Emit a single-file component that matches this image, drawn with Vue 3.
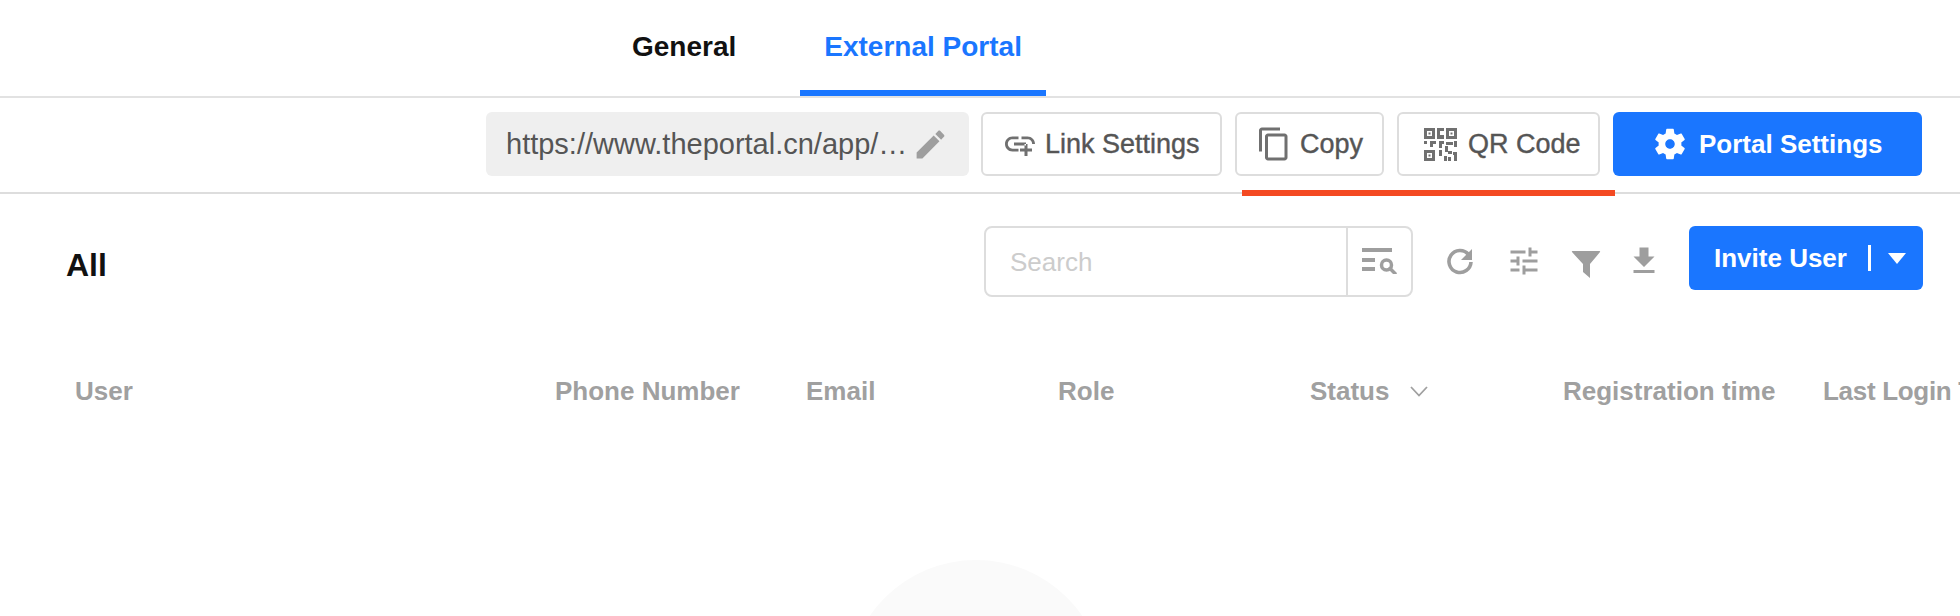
<script setup>
const columns = [
  { label: 'User', width: 480 },
  { label: 'Phone Number', width: 251 },
  { label: 'Email', width: 252 },
  { label: 'Role', width: 252 },
  { label: 'Status', width: 253, sort: true },
  { label: 'Registration time', width: 260 },
  { label: 'Last Login Time', width: 260 },
]
</script>

<template>
  <div class="page">
    <nav class="tabs">
      <a class="tab">General</a>
      <a class="tab active">External Portal</a>
    </nav>

    <div class="toolbar">
      <div class="url">
        <span class="url-text">https://www.theportal.cn/app/…</span>
        <svg class="ic-edit" viewBox="0 0 24 24"><path d="M3 17.25V21h3.75L17.81 9.94l-3.75-3.75L3 17.25zM20.71 7.04c.39-.39.39-1.02 0-1.41l-2.34-2.34c-.39-.39-1.02-.39-1.41 0l-1.83 1.83 3.75 3.75 1.83-1.83z"/></svg>
      </div>
      <button class="btn link">
        <svg class="ic-link" viewBox="0 0 24 24"><path d="M8 11h8v2H8zm12.1 1H22c0-2.76-2.24-5-5-5h-4v1.9h4c1.71 0 3.1 1.39 3.1 3.1zM3.9 12c0-1.71 1.39-3.1 3.1-3.1h4V7H7c-2.76 0-5 2.24-5 5s2.24 5 5 5h4v-1.9H7c-1.71 0-3.1-1.39-3.1-3.1zM17 12h-2v3h-3v2h3v3h2v-3h3v-2h-3z"/></svg>
        Link Settings
      </button>
      <button class="btn copy">
        <svg class="ic-copy" viewBox="0 0 24 24"><path d="M16 1H4c-1.1 0-2 .9-2 2v14h2V3h12V1zm3 4H8c-1.1 0-2 .9-2 2v14c0 1.1.9 2 2 2h11c1.1 0 2-.9 2-2V7c0-1.1-.9-2-2-2zm0 16H8V7h11v14z"/></svg>
        Copy
      </button>
      <button class="btn qr">
        <svg class="ic-qr" viewBox="0 0 33 33">
          <path fill-rule="evenodd" d="M0 0h11v11H0zM3 3v5h5V3zM22 0h11v11H22zM25 3v5h5V3zM0 22h11v11H0zM3 25v5h5v-5z"/>
          <path d="M4.5 4.5h2v2h-2zM26.5 4.5h2v2h-2zM4.5 26.5h2v2h-2z"/>
          <path d="M13 0h7v3h-4v4h4v4h-7zM0 13h3v3H0zM6 13h6v3H9v3H6zM15 13h5v3h-2v4h-3zM22 14h7v3h-7zM30 13h3v6h-3zM15 22h3v6h-3zM21 18h3v5h4v3h-4v-2h-3zM29 24h4v9h-3v-6h-1zM20 28h3v5h-3zM24 29h3v4h-3z"/>
        </svg>
        QR Code
      </button>
      <button class="btn primary portal">
        <svg class="ic-gear" viewBox="0 0 24 24"><path d="M19.14 12.94c.04-.3.06-.61.06-.94 0-.32-.02-.64-.07-.94l2.03-1.58c.18-.14.23-.41.12-.61l-1.92-3.32c-.12-.22-.37-.29-.59-.22l-2.39.96c-.5-.38-1.03-.7-1.62-.94l-.36-2.54c-.04-.24-.24-.41-.48-.41h-3.84c-.24 0-.43.17-.47.41l-.36 2.54c-.59.24-1.13.57-1.62.94l-2.39-.96c-.22-.08-.47 0-.59.22L2.74 8.87c-.12.21-.08.47.12.61l2.03 1.58c-.05.3-.09.63-.09.94s.02.64.07.94l-2.03 1.58c-.18.14-.23.41-.12.61l1.92 3.32c.12.22.37.29.59.22l2.39-.96c.5.38 1.03.7 1.62.94l.36 2.54c.05.24.24.41.48.41h3.84c.24 0 .44-.17.47-.41l.36-2.54c.59-.24 1.13-.56 1.62-.94l2.39.96c.22.08.47 0 .59-.22l1.92-3.32c.12-.22.07-.47-.12-.61l-2.01-1.58zM12 15c-1.65 0-3-1.35-3-3s1.35-3 3-3 3 1.35 3 3-1.35 3-3 3z"/></svg>
        Portal Settings
      </button>
      <div class="red-mark"></div>
    </div>

    <div class="filters">
      <h2 class="title">All</h2>
      <div class="search">
        <input class="search-input" placeholder="Search" />
        <div class="search-btn">
          <svg class="ic-search" viewBox="0 0 35 26">
            <path d="M0 0h30v4H0zM0 10h13v4H0zM0 19h13v4H0z"/>
            <circle cx="24.5" cy="17" r="5" fill="none" stroke="#9e9e9e" stroke-width="3.5"/>
            <path d="M28 20.5l5 5" fill="none" stroke="#9e9e9e" stroke-width="3.5" stroke-linecap="round"/>
          </svg>
        </div>
      </div>
      <svg class="tool refresh" viewBox="0 0 36 36">
        <path d="M26.5 11.5A11 11 0 1 0 29 19" fill="none" stroke="#9e9e9e" stroke-width="3.6"/>
        <path d="M30 6v11H19z"/>
      </svg>
      <svg class="tool tune" viewBox="0 0 24 24"><path d="M3 17v2h6v-2H3zM3 5v2h10V5H3zm10 16v-2h8v-2h-8v-2h-2v6h2zM7 9v2H3v2h4v2h2V9H7zm14 4v-2H11v2h10zm-6-4h2V7h4V5h-4V3h-2v6z"/></svg>
      <svg class="tool funnel" viewBox="0 0 36 36"><path d="M4.5 8h27c.6 0 .9.6.5 1.1L22 21v14l-7-6v-8L4 9.1C3.600 8.600 3.900 8 4.500 8z"/></svg>
      <svg class="tool download" viewBox="0 0 24 24"><path d="M19 9h-4V3H9v6H5l7 7 7-7zM5 18v2h14v-2H5z"/></svg>
      <button class="btn primary invite">
        Invite User
        <span class="sep"></span>
        <span class="caret"></span>
      </button>
    </div>

    <div class="thead">
      <div v-for="col in columns" :key="col.label" class="th" :style="{ width: col.width + 'px' }">
        {{ col.label }}
        <svg v-if="col.sort" class="ic-chevron" viewBox="0 0 18 11"><path d="M1 1l8 8.5L17 1" fill="none" stroke="#a0a0a0" stroke-width="1.8"/></svg>
      </div>
    </div>

    <div class="empty"><div class="empty-circle"></div></div>
  </div>
</template>

<style scoped>
.page {
  position: relative;
  width: 1960px;
  height: 616px;
  overflow: hidden;
  background: #fff;
  font-family: "Liberation Sans", Arial, sans-serif;
}

.tabs {
  display: flex;
  gap: 40px;
  height: 96px;
  padding-left: 608px;
  border-bottom: 2px solid #e2e2e2;
}

.tab {
  padding: 0 24px;
  line-height: 94px;
  font-size: 28px;
  font-weight: 700;
  color: #111;
}

.tab.active {
  height: 90px;
  color: #1a76ff;
  border-bottom: 6px solid #1a76ff;
}

.toolbar {
  position: relative;
  display: flex;
  justify-content: flex-end;
  gap: 13px;
  height: 96px;
  padding: 14px 38px 0 0;
  box-sizing: border-box;
  border-bottom: 2px solid #ddd;
}

.url {
  display: flex;
  align-items: center;
  width: 483px;
  height: 64px;
  margin-right: -1px;
  padding-left: 20px;
  box-sizing: border-box;
  background: #efefef;
  border-radius: 6px;
  color: #555;
  font-size: 29px;
  white-space: nowrap;
}

.ic-edit {
  flex: none;
  width: 37px;
  height: 37px;
  margin-left: 5px;
  fill: #9e9e9e;
}

.btn {
  display: flex;
  align-items: center;
  height: 64px;
  padding: 0;
  box-sizing: border-box;
  border: 2.5px solid #ddd;
  border-radius: 6px;
  background: #fff;
  color: #555;
  font-family: inherit;
  font-size: 27px;
  -webkit-text-stroke: .4px #555;
  white-space: nowrap;
}

.btn svg {
  fill: #707070;
}

.link { width: 241px; padding-left: 19px; gap: 7px; }
.ic-link { width: 36px; height: 36px; }
.copy { width: 149px; padding-left: 19px; gap: 8px; }
.ic-copy { width: 36px; height: 36px; }
.qr { width: 203px; padding-left: 25px; gap: 11px; }
.ic-qr { width: 33px; height: 33px; }

.btn.primary {
  border: 0;
  background: #1a76ff;
  color: #fff;
  font-size: 26px;
  font-weight: 700;
  -webkit-text-stroke: 0;
}

.btn.primary svg { fill: #fff; }

.portal { width: 309px; padding-left: 38px; gap: 10px; }
.ic-gear { width: 38px; height: 38px; }

.red-mark {
  position: absolute;
  left: 1242px;
  top: 92px;
  width: 373px;
  height: 6px;
  background: #f44a22;
}

.filters {
  display: flex;
  align-items: flex-start;
  height: 166px;
  padding: 32px 37px 0 66px;
  box-sizing: border-box;
}

.title {
  flex: 1;
  margin: 19px 0 0;
  font-size: 32px;
  line-height: 40px;
  font-weight: 700;
  color: #111;
}

.search {
  display: flex;
  width: 429px;
  height: 71px;
  box-sizing: border-box;
  border: 2px solid #ddd;
  border-radius: 8px;
}

.search-input {
  width: 360px;
  padding: 2px 0 0 24px;
  box-sizing: border-box;
  border: 0;
  outline: 0;
  background: transparent;
  font-family: inherit;
  font-size: 26px;
}

.search-input::placeholder { color: #ccc; }

.search-btn {
  flex: 1;
  display: flex;
  align-items: center;
  justify-content: center;
  border-left: 2px solid #ddd;
}

.ic-search { width: 35px; height: 26px; fill: #9e9e9e; margin-top: -2px; }

.tool {
  width: 36px;
  height: 36px;
  margin-top: 17px;
  fill: #9e9e9e;
}

.refresh { margin-left: 29px; }
.tune { margin-left: 28px; }
.funnel { margin-left: 26px; }
.download { margin-left: 22px; }

.invite {
  width: 234px;
  margin-left: 27px;
  padding-left: 25px;
}

.sep {
  width: 3px;
  height: 26px;
  margin-left: 21px;
  background: #fff;
}

.caret {
  margin-left: 17px;
  border-left: 9.5px solid transparent;
  border-right: 9.5px solid transparent;
  border-top: 11px solid #fff;
}

.thead {
  display: flex;
  height: 62px;
  padding-left: 75px;
  align-items: center;
  white-space: nowrap;
}

.th {
  flex: none;
  display: flex;
  align-items: center;
  font-size: 26px;
  font-weight: 700;
  color: #a0a0a0;
}

.th:last-child { letter-spacing: -.3px; }

.ic-chevron { width: 18px; height: 11px; margin-left: 21px; }

.empty {
  margin-top: 138px;
  padding-left: 847px;
}

.empty-circle {
  width: 258px;
  height: 258px;
  border-radius: 50%;
  background: #fafafa;
}
</style>

<style>
html, body {
  background: #fff;
  overflow: hidden;
}
</style>
